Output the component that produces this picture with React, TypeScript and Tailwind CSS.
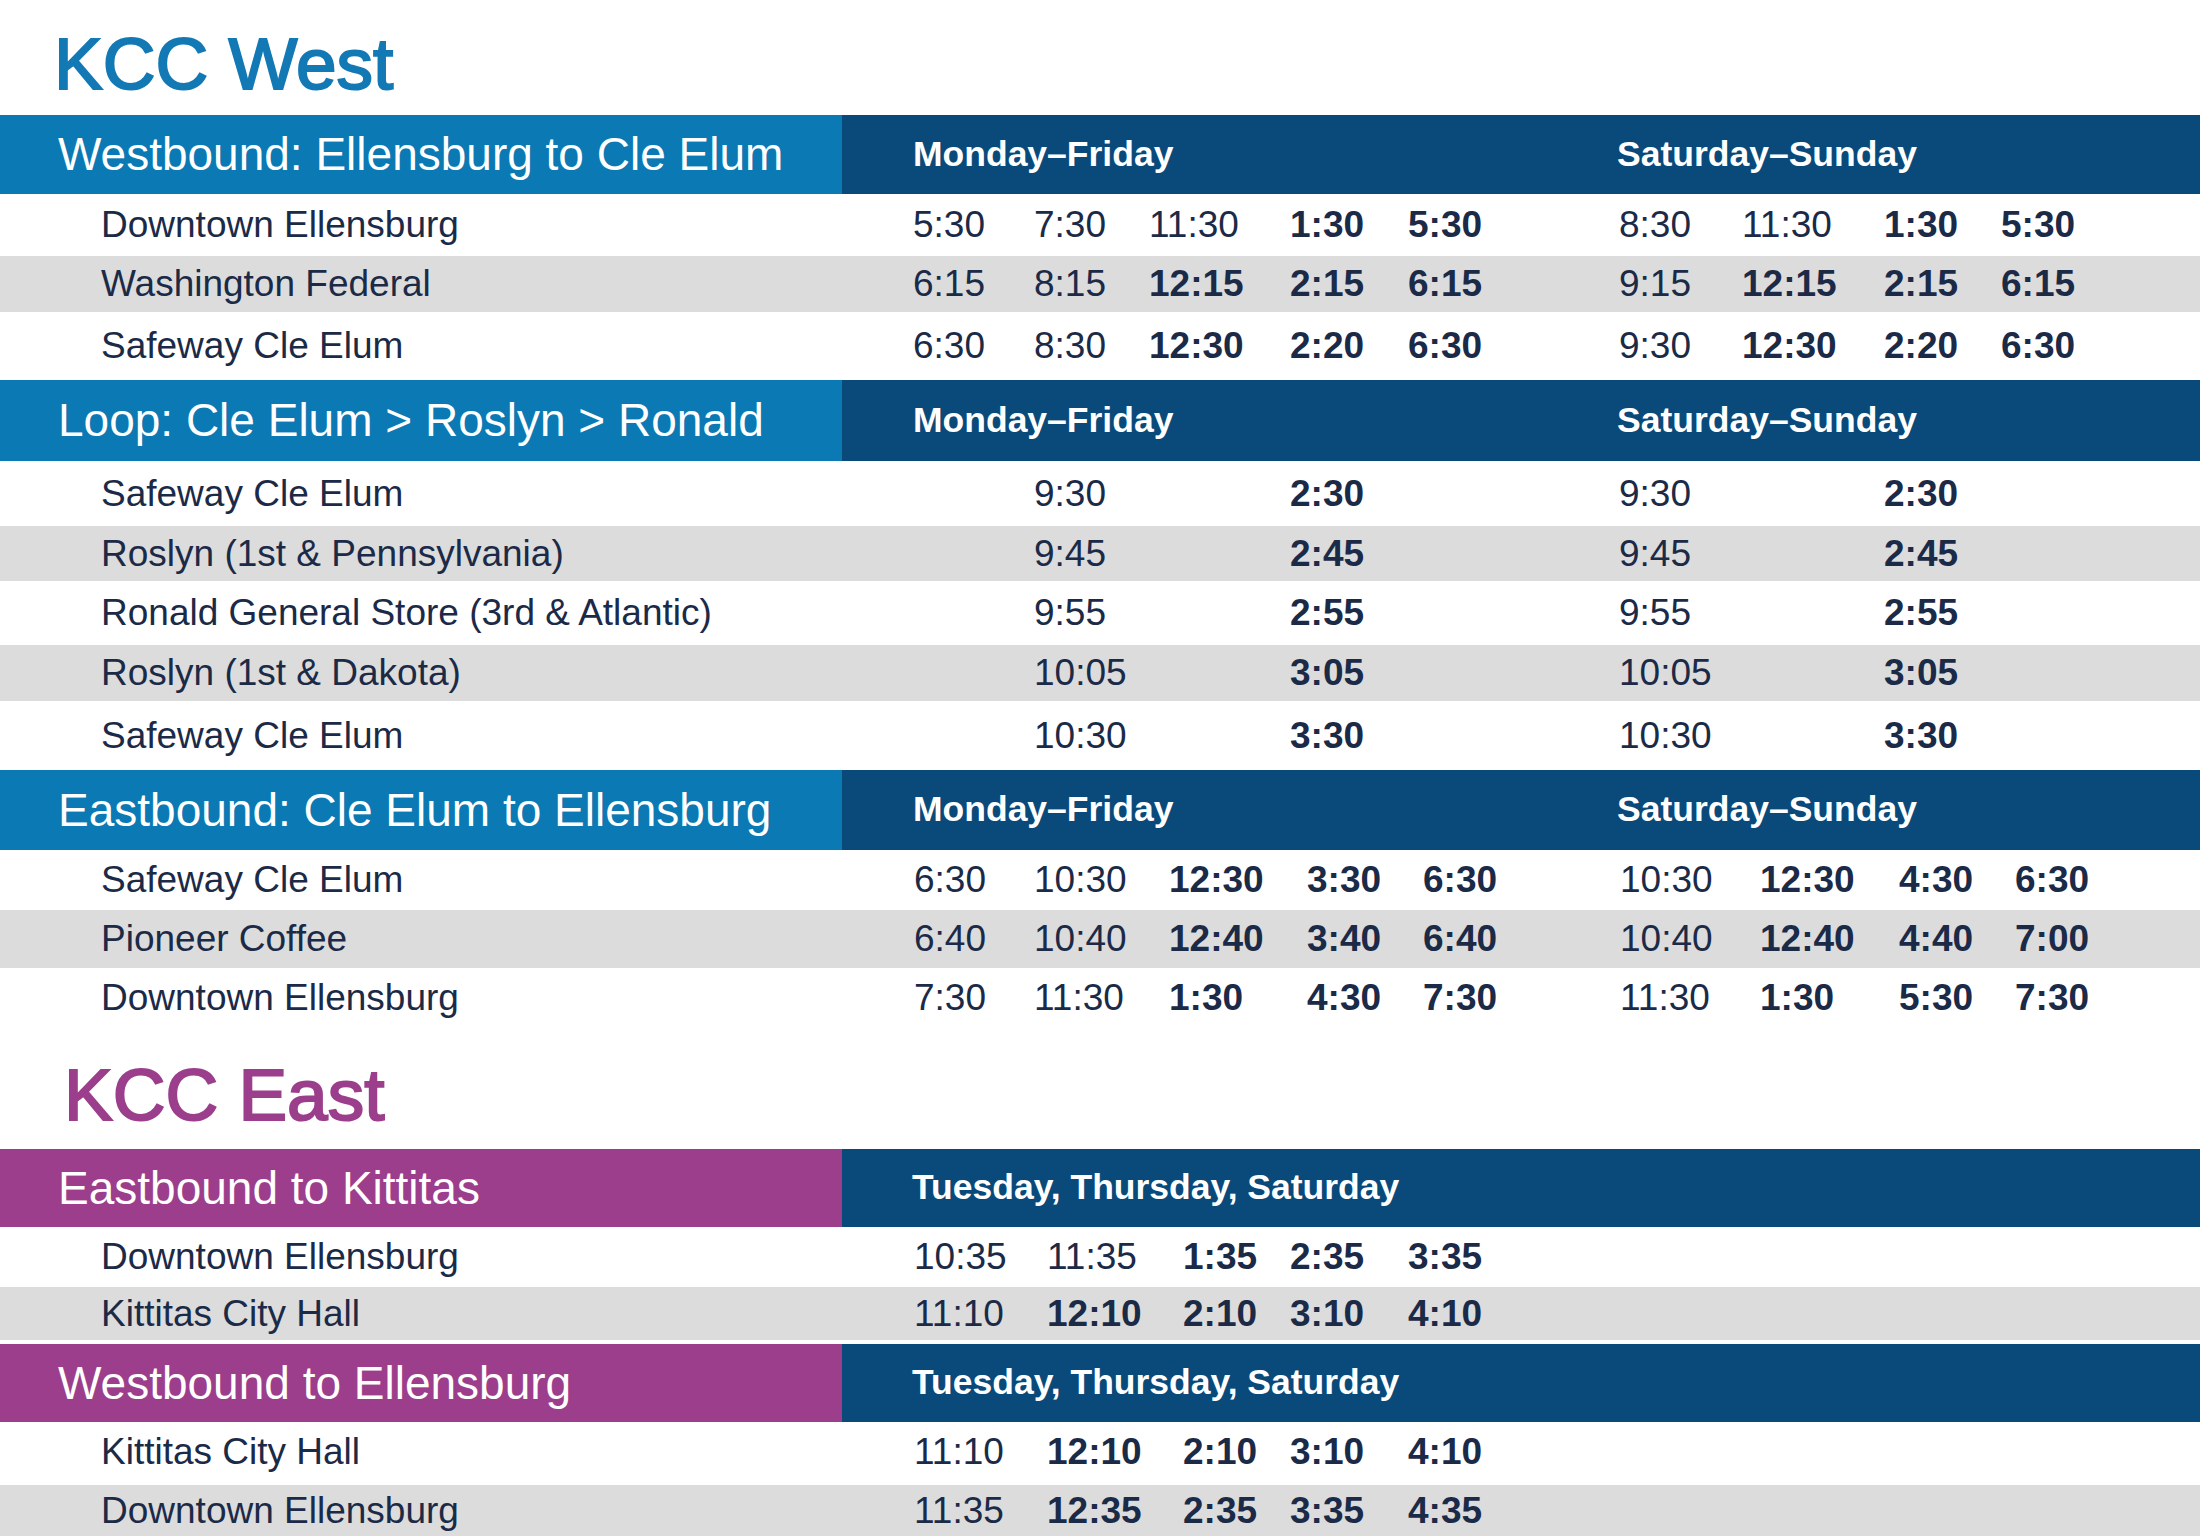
import React from "react";

type RowDef = { name: string; times: string[]; h: string; gray?: boolean; extra?: string };

const G1 = "grid grid-cols-[121px_115px_141px_118px_211px_123px_142px_117px_1fr] pl-[71px]";
const G3 = "grid grid-cols-[120px_135px_138px_116px_197px_140px_139px_116px_1fr] pl-[72px]";
const G4 = "grid grid-cols-[133px_136px_107px_118px_1fr] pl-[72px]";

function Row({ r, grid }: { r: RowDef; grid: string }) {
  return (
    <div
      className={`flex items-center ${r.h} ${r.gray ? "bg-[#dcdcdc]" : "bg-white"} ${r.extra ?? ""} text-[37px] text-[#1b2a47]`}
    >
      <div className="w-[842px] shrink-0 pl-[101px] whitespace-nowrap">{r.name}</div>
      <div className={`flex-1 ${grid} whitespace-nowrap`}>
        {r.times.map((t, i) => (
          <span key={i} className={t.startsWith("!") ? "font-bold" : "font-normal"}>
            {t.replace("!", "")}
          </span>
        ))}
      </div>
    </div>
  );
}

function Header({
  title,
  h,
  magenta,
  labels,
}: {
  title: string;
  h: string;
  magenta?: boolean;
  labels: "week" | "tts";
}) {
  return (
    <div className={`flex ${h}`}>
      <div
        className={`w-[842px] shrink-0 flex items-center pl-[58px] text-[46px] text-white whitespace-nowrap ${
          magenta ? "bg-[#9c3e8b]" : "bg-[#0b79b3]"
        }`}
      >
        {title}
      </div>
      <div className="flex-1 flex items-center bg-[#0a4a7a] text-[35.5px] font-bold text-white whitespace-nowrap">
        {labels === "week" ? (
          <>
            <div className="w-[775px] pl-[71px]">Monday–Friday</div>
            <div>Saturday–Sunday</div>
          </>
        ) : (
          <div className="pl-[70px]">Tuesday, Thursday, Saturday</div>
        )}
      </div>
    </div>
  );
}

const s1: RowDef[] = [
  { name: "Downtown Ellensburg", h: "h-[62px]", times: ["5:30", "7:30", "11:30", "!1:30", "!5:30", "8:30", "11:30", "!1:30", "!5:30"] },
  { name: "Washington Federal", h: "h-[56px]", gray: true, times: ["6:15", "8:15", "!12:15", "!2:15", "!6:15", "9:15", "!12:15", "!2:15", "!6:15"] },
  { name: "Safeway Cle Elum", h: "h-[68px]", times: ["6:30", "8:30", "!12:30", "!2:20", "!6:30", "9:30", "!12:30", "!2:20", "!6:30"] },
];

const s2: RowDef[] = [
  { name: "Safeway Cle Elum", h: "h-[65px]", times: ["", "9:30", "", "!2:30", "", "9:30", "", "!2:30"] },
  { name: "Roslyn (1st & Pennsylvania)", h: "h-[55px]", gray: true, times: ["", "9:45", "", "!2:45", "", "9:45", "", "!2:45"] },
  { name: "Ronald General Store (3rd & Atlantic)", h: "h-[64px]", times: ["", "9:55", "", "!2:55", "", "9:55", "", "!2:55"] },
  { name: "Roslyn (1st & Dakota)", h: "h-[56px]", gray: true, times: ["", "10:05", "", "!3:05", "", "10:05", "", "!3:05"] },
  { name: "Safeway Cle Elum", h: "h-[69px]", times: ["", "10:30", "", "!3:30", "", "10:30", "", "!3:30"] },
];

const s3: RowDef[] = [
  { name: "Safeway Cle Elum", h: "h-[60px]", times: ["6:30", "10:30", "!12:30", "!3:30", "!6:30", "10:30", "!12:30", "!4:30", "!6:30"] },
  { name: "Pioneer Coffee", h: "h-[58px]", gray: true, times: ["6:40", "10:40", "!12:40", "!3:40", "!6:40", "10:40", "!12:40", "!4:40", "!7:00"] },
  { name: "Downtown Ellensburg", h: "h-[60px]", times: ["7:30", "11:30", "!1:30", "!4:30", "!7:30", "11:30", "!1:30", "!5:30", "!7:30"] },
];

const s4: RowDef[] = [
  { name: "Downtown Ellensburg", h: "h-[60px]", times: ["10:35", "11:35", "!1:35", "!2:35", "!3:35"] },
  { name: "Kittitas City Hall", h: "h-[57px]", gray: true, extra: "border-b-4 border-white", times: ["11:10", "!12:10", "!2:10", "!3:10", "!4:10"] },
];

const s5: RowDef[] = [
  { name: "Kittitas City Hall", h: "h-[60px]", times: ["11:10", "!12:10", "!2:10", "!3:10", "!4:10"] },
  { name: "Downtown Ellensburg", h: "h-[54px]", gray: true, extra: "border-t-[3px] border-white", times: ["11:35", "!12:35", "!2:35", "!3:35", "!4:35"] },
];

export default function App() {
  return (
    <div className="w-[2200px] h-[1536px] overflow-hidden bg-white font-['Liberation_Sans',Arial,sans-serif]">
      <div className="h-[115px] pt-[27px] pl-[54px] text-[73px] leading-[73px] text-[#1379b5] [-webkit-text-stroke:2px_#1379b5]">
        KCC West
      </div>

      <Header title="Westbound: Ellensburg to Cle Elum" h="h-[79px]" labels="week" />
      {s1.map((r, i) => (
        <Row key={i} r={r} grid={G1} />
      ))}

      <Header title="Loop: Cle Elum > Roslyn > Ronald" h="h-[81px]" labels="week" />
      {s2.map((r, i) => (
        <Row key={i} r={r} grid={G1} />
      ))}

      <Header title="Eastbound: Cle Elum to Ellensburg" h="h-[80px]" labels="week" />
      {s3.map((r, i) => (
        <Row key={i} r={r} grid={G3} />
      ))}

      <div className="h-[121px] pt-[30px] pl-[64px] text-[73px] leading-[73px] text-[#9b3e8c] [-webkit-text-stroke:2px_#9b3e8c]">
        KCC East
      </div>

      <Header title="Eastbound to Kittitas" h="h-[78px]" magenta labels="tts" />
      {s4.map((r, i) => (
        <Row key={i} r={r} grid={G4} />
      ))}

      <Header title="Westbound to Ellensburg" h="h-[78px]" magenta labels="tts" />
      {s5.map((r, i) => (
        <Row key={i} r={r} grid={G4} />
      ))}
    </div>
  );
}
